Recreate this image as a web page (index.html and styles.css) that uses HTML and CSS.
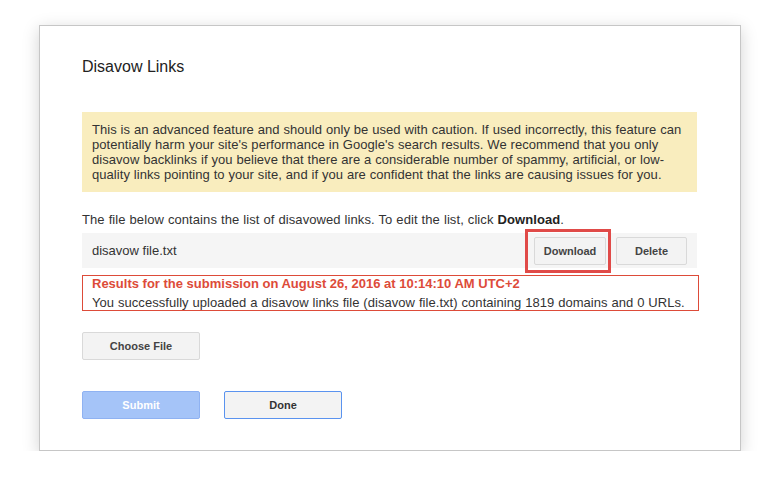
FILE: index.html
```html
<!DOCTYPE html>
<html lang="en">
<head>
  <meta charset="UTF-8" />
  <title>Disavow Links</title>
  <link rel="stylesheet" href="styles.css">
</head>
<body>

<div class="dialog">
  <h1 class="dialog-title">Disavow Links</h1>

  <div class="warning">
    This is an advanced feature and should only be used with caution. If used incorrectly, this feature can
    potentially harm your site's performance in Google's search results. We recommend that you only
    disavow backlinks if you believe that there are a considerable number of spammy, artificial, or low-quality
    links pointing to your site, and if you are confident that the links are causing issues for you.
  </div>

  <p class="file-note">The file below contains the list of disavowed links. To edit the list, click <b>Download</b>.</p>

  <div class="file-row">
    <span class="file-name">disavow file.txt</span>
    <div class="file-actions">
      <span class="highlight-wrap">
        <button class="btn btn-small">Download</button>
        <span class="highlight"></span>
      </span>
      <button class="btn btn-small btn-delete">Delete</button>
    </div>
  </div>

  <div class="results">
    <div class="results-title">Results for the submission on August 26, 2016 at 10:14:10 AM UTC+2</div>
    <div class="results-text">You successfully uploaded a disavow links file (disavow file.txt) containing 1819 domains and 0 URLs.</div>
  </div>

  <button class="btn">Choose File</button>

  <div class="dialog-buttons">
    <button class="btn btn-submit" disabled>Submit</button>
    <button class="btn btn-done">Done</button>
  </div>
</div>

</body>
</html>
```

FILE: styles.css
```css
* {
  margin: 0;
  padding: 0;
  box-sizing: border-box;
}
body {
  font-family: "Liberation Sans", Arial, sans-serif;
  font-size: 13px;
  color: #333;
  background: #fff;
}
.dialog {
  width: 702px;
  margin: 25px 0 0 39px;
  padding: 31px 42px 31px 42px;
  background: #fff;
  border: 1px solid #c6c6c6;
  box-shadow: 0 4px 16px rgba(0,0,0,0.18);
}
.dialog-title {
  font-size: 16px;
  font-weight: normal;
  line-height: 20px;
  color: #222;
  margin-bottom: 35px;
}
.warning {
  background: #f9edbe;
  padding: 10px 10px;
  line-height: 15px;
  width: 615px;
  letter-spacing: 0.05px;
  word-spacing: 0.2px;
}
.file-note {
  margin-top: 20px;
  line-height: 15px;
  letter-spacing: 0.08px;
  word-spacing: 0.3px;
}
.file-note b {
  color: #222;
}
.file-row {
  margin-top: 6px;
  width: 615px;
  height: 35px;
  background: #f5f5f5;
  display: flex;
  align-items: center;
  justify-content: space-between;
  padding: 0 10px;
}
.file-actions {
  display: flex;
  gap: 10px;
}
.highlight-wrap {
  position: relative;
  display: inline-block;
}
.highlight {
  position: absolute;
  left: -9px;
  right: -5px;
  top: -8px;
  bottom: -8px;
  border: 3px solid #e04a48;
  pointer-events: none;
}
.btn {
  display: block;
  width: 118px;
  height: 28px;
  font-family: "Liberation Sans", Arial, sans-serif;
  font-size: 11px;
  font-weight: bold;
  color: #444;
  background: #f3f3f3;
  border: 1px solid #d9d9d9;
  border-radius: 2px;
  cursor: pointer;
}
.btn-small {
  width: 72px;
}
.btn-delete {
  width: 71px;
}
.results {
  margin-top: 7px;
  width: 617px;
  border: 1px solid #dd4b39;
  padding: 0 9px;
  margin-bottom: 21px;
}
.results-title {
  color: #dd4b39;
  font-weight: bold;
  line-height: 15px;
  margin-bottom: 4px;
}
.results-text {
  line-height: 15px;
  letter-spacing: 0.05px;
  word-spacing: 0.2px;
}
.dialog-buttons {
  display: flex;
  gap: 24px;
  margin-top: 31px;
}
.btn-submit {
  background: #a5c4f8;
  border-color: #8fb2f2;
  color: #fff;
  cursor: default;
}
.btn-done {
  border-color: #5a93ef;
  color: #333;
}
```
